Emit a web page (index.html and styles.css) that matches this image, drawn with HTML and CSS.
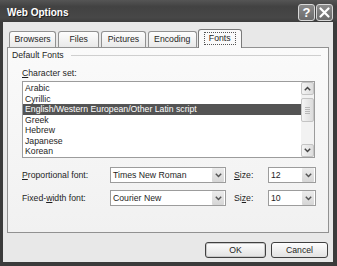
FILE: index.html
```html
<!DOCTYPE html>
<html>
    <head>
        <title>Web Options</title>
        <link rel="stylesheet" href="styles.css">
    </head>
    <body>
        <div class="window">
            <div class="titlebar">
                <span class="title">Web Options</span>
                <div class="controls">
                    <div class="tbtn">?</div>
                    <div class="tbtn">
                        <svg width="11" height="11" viewBox="0 0 11 11"><path d="M1.5 1.5l8 8M9.5 1.5l-8 8" stroke="#fff" stroke-width="2.2" stroke-linecap="round"/></svg>
                    </div>
                </div>
            </div>
            <div class="client">
                <div class="tabs">
                    <div class="tab browsers">Browsers</div>
                    <div class="tab">Files</div>
                    <div class="tab">Pictures</div>
                    <div class="tab">Encoding</div>
                    <div class="tab active"><span class="focus">Fonts</span></div>
                </div>
                <div class="panel">
                    <div class="group-head">
                        <span>Default Fonts</span>
                        <span class="rule"></span>
                    </div>
                    <div class="group">
                        <div class="field-label"><u>C</u>haracter set:</div>
                        <div class="listbox">
                            <ul class="items">
                                <li>Arabic</li>
                                <li>Cyrillic</li>
                                <li class="selected">English/Western European/Other Latin script</li>
                                <li>Greek</li>
                                <li>Hebrew</li>
                                <li>Japanese</li>
                                <li>Korean</li>
                            </ul>
                            <div class="scrollbar">
                                <div class="sb-btn">
                                    <svg width="7" height="5" viewBox="0 0 7 5"><path d="M0.8 4.2L3.5 1.5L6.2 4.2" fill="none" stroke="#444" stroke-width="1.5"/></svg>
                                </div>
                                <div class="sb-gap"></div>
                                <div class="thumb"><span></span><span></span><span></span><span></span></div>
                                <div class="track"></div>
                                <div class="sb-btn">
                                    <svg width="7" height="5" viewBox="0 0 7 5"><path d="M0.8 0.8L3.5 3.5L6.2 0.8" fill="none" stroke="#444" stroke-width="1.5"/></svg>
                                </div>
                            </div>
                        </div>
                        <div class="font-row">
                            <div class="row-label"><u>P</u>roportional font:</div>
                            <div class="combo wide">
                                <span class="value">Times New Roman</span>
                                <span class="arrow"><svg width="7" height="5" viewBox="0 0 7 5"><path d="M0.8 0.8L3.5 3.5L6.2 0.8" fill="none" stroke="#555" stroke-width="1.5"/></svg></span>
                            </div>
                            <div class="size-label"><u>S</u>ize:</div>
                            <div class="combo small">
                                <span class="value">12</span>
                                <span class="arrow"><svg width="7" height="5" viewBox="0 0 7 5"><path d="M0.8 0.8L3.5 3.5L6.2 0.8" fill="none" stroke="#555" stroke-width="1.5"/></svg></span>
                            </div>
                        </div>
                        <div class="font-row second">
                            <div class="row-label">Fixed-<u>w</u>idth font:</div>
                            <div class="combo wide">
                                <span class="value">Courier New</span>
                                <span class="arrow"><svg width="7" height="5" viewBox="0 0 7 5"><path d="M0.8 0.8L3.5 3.5L6.2 0.8" fill="none" stroke="#555" stroke-width="1.5"/></svg></span>
                            </div>
                            <div class="size-label">Si<u>z</u>e:</div>
                            <div class="combo small">
                                <span class="value">10</span>
                                <span class="arrow"><svg width="7" height="5" viewBox="0 0 7 5"><path d="M0.8 0.8L3.5 3.5L6.2 0.8" fill="none" stroke="#555" stroke-width="1.5"/></svg></span>
                            </div>
                        </div>
                    </div>
                </div>
                <div class="actions">
                    <div class="btn ok">OK</div>
                    <div class="btn cancel">Cancel</div>
                </div>
            </div>
        </div>
    </body>
</html>
```

FILE: styles.css
```css
* {
    margin: 0;
    padding: 0;
    box-sizing: border-box;
}

body {
    background: #3a3a3a;
    font-family: "Liberation Sans", Arial, sans-serif;
    font-size: 8.7px;
    color: #1e1e1e;
}

.window {
    width: 337px;
    height: 266px;
    display: flex;
    flex-direction: column;
    background: #3b3b3b;
}

.titlebar {
    height: 22px;
    padding: 4px 4px 0 7px;
    display: flex;
    justify-content: space-between;
    align-items: flex-start;
    background: linear-gradient(#555, #424242 30%, #474747 80%, #3d3d3d);
}

.title {
    color: #fff;
    font-weight: bold;
    font-size: 10px;
    line-height: 18px;
    text-shadow: 1px 1px 0 #222;
}

.controls {
    display: flex;
    gap: 1px;
}

.tbtn {
    width: 17px;
    height: 17px;
    border: 1px solid #d8d8d8;
    border-radius: 3px;
    background: linear-gradient(#8a8a8a, #6c6c6c);
    color: #fff;
    font-weight: bold;
    font-size: 13px;
    line-height: 15px;
    text-align: center;
    display: flex;
    justify-content: center;
    align-items: center;
}

.client {
    flex: 1;
    margin: 0 4px 4px 3px;
    padding-top: 7px;
    background: #e8e8e8;
    display: flex;
    flex-direction: column;
}

.tabs {
    display: flex;
    align-items: flex-end;
    gap: 2px;
    height: 18px;
    margin-left: 6px;
}

.tab {
    height: 16px;
    min-width: 41px;
    padding: 0 5.5px;
    border: 1px solid #919191;
    border-bottom: none;
    border-radius: 3px 3px 0 0;
    background: linear-gradient(#fdfdfd, #e9e9e9);
    line-height: 15px;
    text-align: center;
}

.tab.browsers {
    padding: 0 4.5px;
}

.tab.active {
    position: relative;
    z-index: 1;
    height: 19px;
    margin-bottom: -1px;
    margin-left: -1px;
    padding: 2px 5px 0;
    border-color: #7a7a7a;
    background: #fafafa;
}

.focus {
    display: block;
    padding: 0 4px;
    line-height: 11px;
    border: 1px dotted #555;
}

.panel {
    height: 186px;
    margin: 0 4px;
    padding: 0 7px 0 4px;
    border: 1px solid #919191;
    background: linear-gradient(#fafafa, #f1f1f1);
}

.group-head {
    height: 14px;
    display: flex;
    align-items: center;
    gap: 7px;
}

.rule {
    flex: 1;
    height: 1px;
    margin-top: 1px;
    background: #cfcfcf;
}

.group {
    padding-left: 10px;
}

.field-label {
    margin-top: 5px;
    height: 12px;
    line-height: 12px;
}

.listbox {
    margin-top: 2px;
    width: 293px;
    height: 77px;
    border: 1px solid #9c9c9c;
    background: #fff;
    display: flex;
}

.items {
    flex: 1;
    list-style: none;
    padding-top: 1px;
}

.items li {
    height: 10.5px;
    line-height: 10.5px;
    padding-left: 2px;
    white-space: nowrap;
}

.items li.selected {
    background: #545454;
    color: #fff;
}

.scrollbar {
    width: 13px;
    display: flex;
    flex-direction: column;
    background: #f2f2f2;
}

.sb-btn,
.thumb {
    border: 1px solid #c4c4c4;
    border-radius: 2px;
    background: linear-gradient(90deg, #f4f4f4, #dcdcdc);
}

.sb-btn {
    height: 13px;
    display: flex;
    justify-content: center;
    align-items: center;
}

.sb-gap {
    height: 3px;
}

.thumb {
    height: 24px;
    display: flex;
    flex-direction: column;
    justify-content: center;
    align-items: center;
    gap: 1px;
}

.thumb span {
    width: 5px;
    height: 1px;
    background: #b8b8b8;
}

.track {
    flex: 1;
}

.font-row {
    margin-top: 9px;
    height: 16px;
    display: flex;
    align-items: center;
}

.font-row.second {
    margin-top: 7px;
}

.row-label {
    width: 88px;
}

.size-label {
    width: 34px;
    margin-left: 8px;
}

.combo {
    height: 16px;
    border: 1px solid #9c9c9c;
    background: #fff;
    display: flex;
    align-items: center;
    justify-content: space-between;
    padding: 1px 1px 1px 2px;
}

.combo.wide {
    width: 116px;
}

.combo.small {
    width: 48px;
}

.arrow {
    width: 12px;
    height: 14px;
    border-radius: 1px;
    background: linear-gradient(#ececec, #d6d6d6);
    display: flex;
    justify-content: center;
    align-items: center;
}

.actions {
    margin-top: 9px;
    padding-right: 5px;
    display: flex;
    justify-content: flex-end;
    gap: 5px;
}

.btn {
    height: 16px;
    border: 1px solid #404040;
    border-radius: 3px;
    background: linear-gradient(#fdfdfd, #e2e2e2);
    line-height: 14px;
    text-align: center;
}

.btn.ok {
    width: 61px;
    box-shadow: inset 0 0 0 1px #c9c9c9;
}

.btn.cancel {
    width: 57px;
}
```
